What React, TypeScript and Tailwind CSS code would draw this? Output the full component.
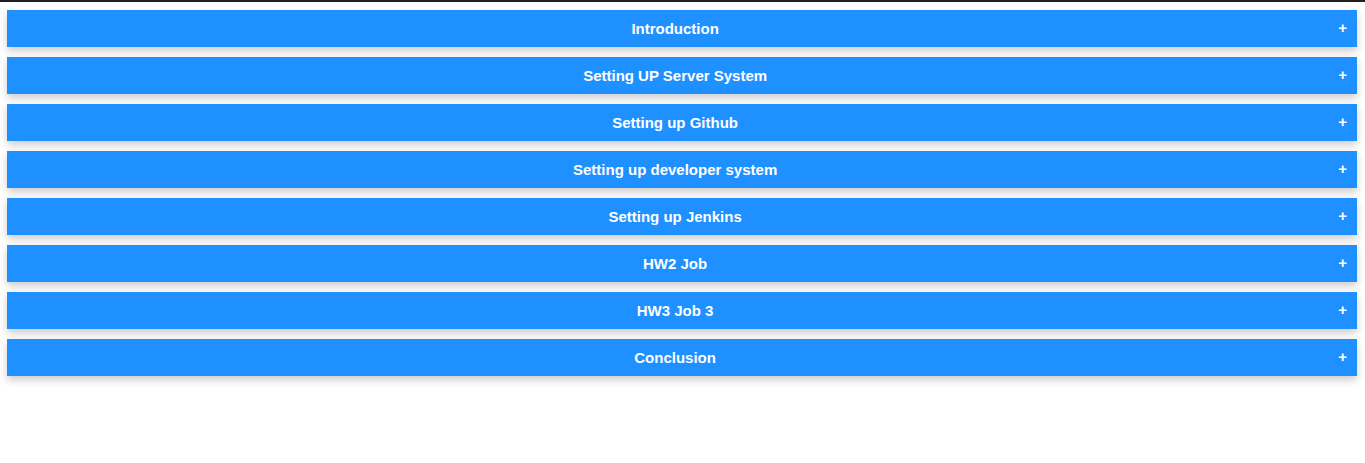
const SECTIONS = [
  "Introduction",
  "Setting UP Server System",
  "Setting up Github",
  "Setting up developer system",
  "Setting up Jenkins",
  "HW2 Job",
  "HW3 Job 3",
  "Conclusion",
];

function AccordionButton({ title }: { title: string }) {
  return (
    <button className="flex items-center w-full h-[37px] px-[10px] pt-[1px] bg-[#1e90ff] text-white font-bold text-[15px] shadow-[0_4px_8px_0_rgba(0,0,0,0.2)] cursor-pointer">
      <span className="flex-1 text-center">{title}</span>
      <span className="ml-[5px] mb-[3px] leading-none">+</span>
    </button>
  );
}

export default function App() {
  return (
    <main className="min-h-screen bg-white font-['Liberation_Sans',Arial,sans-serif]">
      <div className="h-[2px] bg-[#1f1f1f]" />
      <div className="flex flex-col gap-[10px] pt-[8px] pl-[7px] pr-[8px]">
        {SECTIONS.map((s) => (
          <AccordionButton key={s} title={s} />
        ))}
      </div>
    </main>
  );
}
